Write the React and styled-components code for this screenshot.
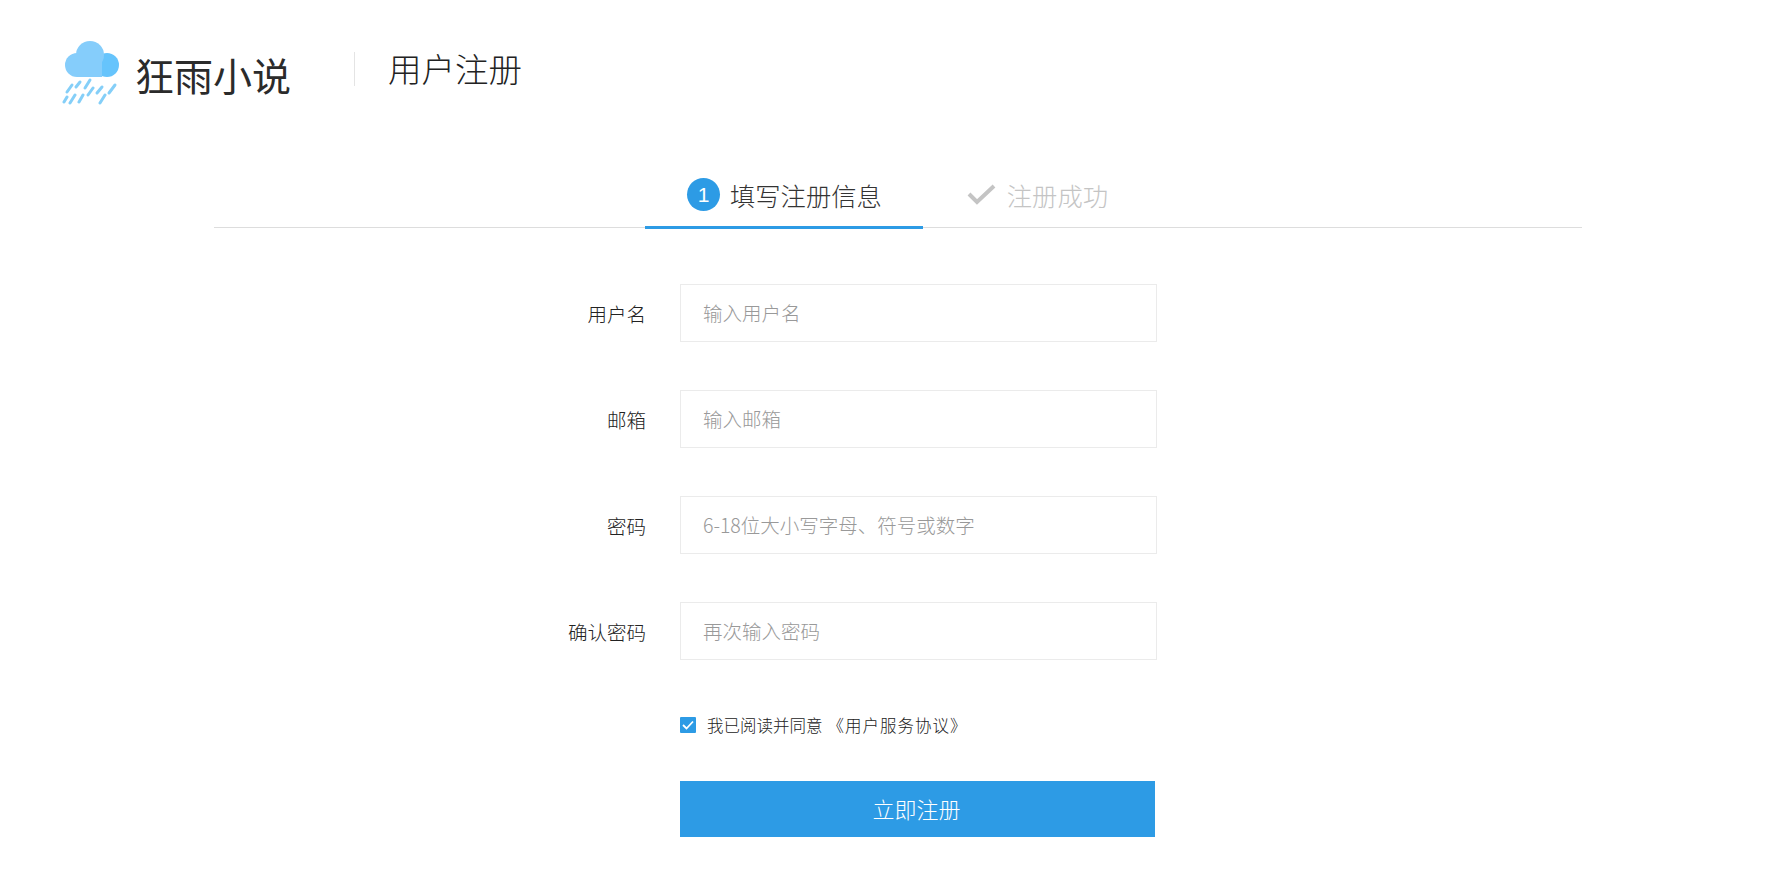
import styled, { createGlobalStyle } from "styled-components";

const GlobalStyle = createGlobalStyle`
  html, body {
    margin: 0;
    padding: 0;
    background: #fff;
  }
  body {
    font-family: "Noto Sans CJK SC", "Liberation Sans", sans-serif;
    color: #333;
  }
  * {
    box-sizing: border-box;
  }
`;

const Page = styled.div`
  width: 1789px;
  height: 886px;
  overflow: hidden;
`;

const Header = styled.header`
  display: flex;
  align-items: center;
  height: 70px;
  margin-top: 38px;
  padding-left: 62px;
`;

const Logo = styled.svg`
  width: 58px;
  height: 66px;
  margin-right: 15px;
`;

const SiteName = styled.h1`
  margin: 0;
  width: 155px;
  padding-top: 2px;
  font-size: 39px;
  font-weight: 400;
  line-height: 50px;
  white-space: nowrap;
  color: #2b2b2b;
`;

const Divider = styled.span`
  width: 1px;
  height: 34px;
  margin: -8px 33px 0 64px;
  background: #e4e4e4;
`;

const PageName = styled.h2`
  margin: -10px 0 0;
  font-size: 33.5px;
  font-weight: 300;
  line-height: 44px;
  color: #222;
`;

const Tabs = styled.div`
  display: flex;
  justify-content: center;
  width: 1368px;
  height: 61px;
  margin: 59px 0 0 214px;
  border-bottom: 1px solid #ddd;
`;

const Tab = styled.div`
  display: flex;
  align-items: center;
  gap: ${(p) => (p.$active ? "10px" : "11px")};
  height: 62px;
  padding: ${(p) => (p.$active ? "0 41px 4px 42px" : "0 43px 4px 44px")};
  border-bottom: 3px solid ${(p) => (p.$active ? "#2d9be5" : "transparent")};
  font-size: 25.3px;
  font-weight: 300;
  color: ${(p) => (p.$active ? "#333" : "#c4c4c4")};
`;

const StepNumber = styled.span`
  display: flex;
  align-items: center;
  justify-content: center;
  width: 33px;
  height: 33px;
  border-radius: 50%;
  background: #2d9be5;
  color: #fff;
  font-family: "Liberation Sans", sans-serif;
  font-size: 21px;
`;

const Form = styled.form`
  display: flex;
  flex-direction: column;
  margin-top: 56px;
`;

const Row = styled.div`
  display: flex;
  align-items: center;
  height: 58px;
  margin-bottom: 48px;
`;

const Label = styled.label`
  width: 646px;
  margin-right: 34px;
  text-align: right;
  font-size: 19.5px;
  font-weight: 300;
  color: #222;
`;

const Input = styled.input`
  width: 477px;
  height: 58px;
  padding: 0 22px 2px;
  border: 1px solid #ebebeb;
  outline: none;
  font-family: inherit;
  font-size: 19.5px;
  font-weight: 300;
  &::placeholder {
    color: #999;
    opacity: 1;
  }
`;

const Agreement = styled.div`
  display: flex;
  align-items: center;
  height: 18px;
  margin: 8px 0 0 680px;
  font-size: 16.5px;
  font-weight: 300;
  color: #222;
`;

const Checkbox = styled.span`
  display: flex;
  align-items: center;
  justify-content: center;
  width: 16px;
  height: 16px;
  margin-right: 11px;
  background: #2d9be5;
  border-radius: 1px;
`;

const BookTitle = styled.span`
  margin-left: 5px;
  letter-spacing: 1px;
`;

const Submit = styled.button`
  display: block;
  width: 475px;
  height: 56px;
  margin: 47px 0 0 680px;
  padding: 0 2px 2px 0;
  border: none;
  background: #2d9be5;
  color: #fff;
  font-family: inherit;
  font-size: 22px;
  font-weight: 300;
`;

const fields = [
  { label: "用户名", placeholder: "输入用户名", type: "text" },
  { label: "邮箱", placeholder: "输入邮箱", type: "text" },
  { label: "密码", placeholder: "6-18位大小写字母、符号或数字", type: "password" },
  { label: "确认密码", placeholder: "再次输入密码", type: "password" },
];

const RainLogo = () => (
  <Logo viewBox="0 0 58 66">
    <circle cx="45" cy="25" r="12" fill="#66c4fc" />
    <circle cx="28" cy="15" r="14" fill="#85cdfb" />
    <circle cx="15" cy="25" r="12" fill="#85cdfb" />
    <path d="M15 13h25v24H15z" fill="#85cdfb" />
    <g stroke="#85cff8" strokeWidth="3" strokeLinecap="round">
      <path d="M18 42l-4 5M28 40l-5 8M40 47l-5 6M53 45l-6 8M10 45l-5 7" />
      <path d="M5 57l-3 5M13 55l-5 8M21 55l-4 7M31 48l-5 7M43 55l-5 8" />
    </g>
  </Logo>
);

const App = () => {
  return (
    <Page>
      <GlobalStyle />
      <Header>
        <RainLogo />
        <SiteName>狂雨小说</SiteName>
        <Divider />
        <PageName>用户注册</PageName>
      </Header>
      <Tabs>
        <Tab $active>
          <StepNumber>1</StepNumber>
          填写注册信息
        </Tab>
        <Tab>
          <svg width="29" height="21" viewBox="0 0 29 21">
            <path d="M2 10l8 8L27 2" fill="none" stroke="#c4c4c4" strokeWidth="4" />
          </svg>
          注册成功
        </Tab>
      </Tabs>
      <Form>
        {fields.map((field) => (
          <Row key={field.label}>
            <Label>{field.label}</Label>
            <Input type={field.type} placeholder={field.placeholder} />
          </Row>
        ))}
        <Agreement>
          <Checkbox>
            <svg width="12" height="10" viewBox="0 0 12 10">
              <path d="M1 5l3.5 3.5L11 1.5" fill="none" stroke="#fff" strokeWidth="1.8" />
            </svg>
          </Checkbox>
          我已阅读并同意
          <BookTitle>《用户服务协议》</BookTitle>
        </Agreement>
        <Submit type="button">立即注册</Submit>
      </Form>
    </Page>
  );
};

export default App;
